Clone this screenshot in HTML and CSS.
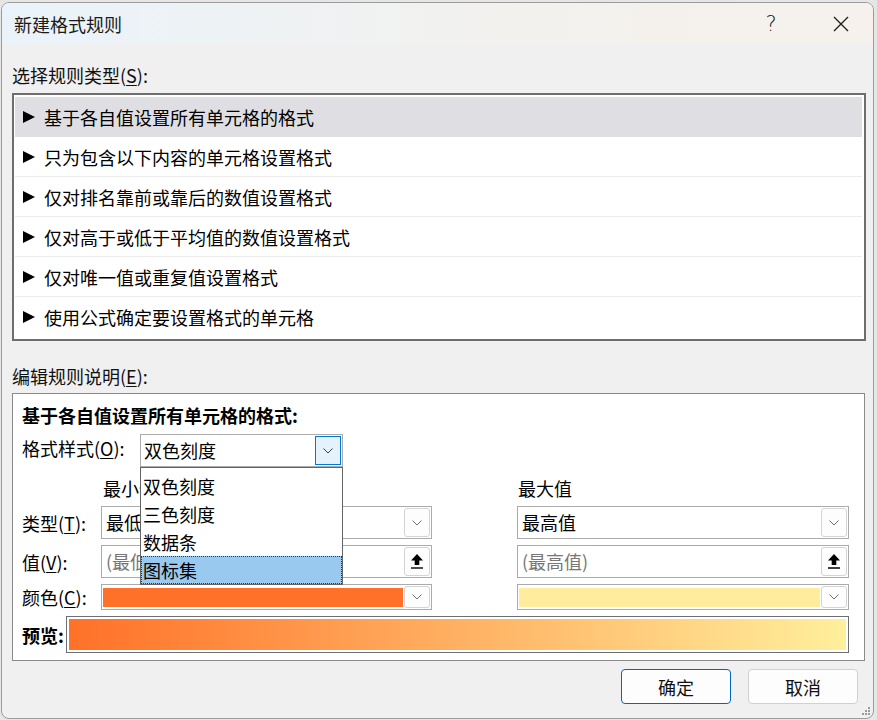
FILE: index.html
```html
<!DOCTYPE html>
<html>
<head>
<meta charset="utf-8">
<title>新建格式规则</title>
<link rel="stylesheet" href="styles.css">
</head>
<body>
<div class="dialog">
	<!-- 标题栏 -->
	<div class="titlebar">
		<span class="title">新建格式规则</span>
		<span class="tb-btn tb-help">?</span>
		<span class="tb-btn tb-close">
			<svg width="16" height="16" viewBox="0 0 16 16"><path d="M1 1L15 15M15 1L1 15" stroke="#1b1b1b" stroke-width="1.3" fill="none"/></svg>
		</span>
	</div>

	<div class="content">
		<div class="label top-label">选择规则类型(<u>S</u>):</div>
		<ul class="rule-list">
			<li class="active"><i class="tri"></i>基于各自值设置所有单元格的格式</li>
			<li><i class="tri"></i>只为包含以下内容的单元格设置格式</li>
			<li><i class="tri"></i>仅对排名靠前或靠后的数值设置格式</li>
			<li><i class="tri"></i>仅对高于或低于平均值的数值设置格式</li>
			<li><i class="tri"></i>仅对唯一值或重复值设置格式</li>
			<li><i class="tri"></i>使用公式确定要设置格式的单元格</li>
		</ul>

		<div class="label edit-label">编辑规则说明(<u>E</u>):</div>
		<div class="panel">
			<div class="panel-title">基于各自值设置所有单元格的格式:</div>

			<div class="style-row">
				<span class="style-label">格式样式(<u>O</u>):</span>
				<div class="combo style-combo">
					<span class="combo-text">双色刻度</span>
					<span class="drop-btn focus">
						<svg width="10" height="6" viewBox="0 0 10 6"><path d="M0.5 0.5L5 5L9.5 0.5" stroke="#3c3c3c" stroke-width="1" fill="none"/></svg>
					</span>
					<ul class="popup">
						<li>双色刻度</li>
						<li>三色刻度</li>
						<li>数据条</li>
						<li class="hot">图标集</li>
					</ul>
				</div>
			</div>

			<div class="grid">
				<span></span>
				<span class="col-head min-head">最小值</span>
				<span class="col-head max-col">最大值</span>

				<span class="row-label">类型(<u>T</u>):</span>
				<div class="combo">
					<span class="combo-text">最低值</span>
					<span class="drop-btn"><svg width="10" height="6" viewBox="0 0 10 6"><path d="M0.5 0.5L5 5L9.5 0.5" stroke="#707070" stroke-width="1" fill="none"/></svg></span>
				</div>
				<div class="combo max-col">
					<span class="combo-text">最高值</span>
					<span class="drop-btn"><svg width="10" height="6" viewBox="0 0 10 6"><path d="M0.5 0.5L5 5L9.5 0.5" stroke="#707070" stroke-width="1" fill="none"/></svg></span>
				</div>

				<span class="row-label">值(<u>V</u>):</span>
				<div class="combo">
					<span class="combo-text placeholder">(最低值)</span>
					<span class="drop-btn"><svg width="14" height="17" viewBox="0 0 14 17"><path d="M7 1L13 7.5H9.3V12H4.7V7.5H1Z" fill="#000"/><path d="M1 15H13" stroke="#000" stroke-width="1.4"/></svg></span>
				</div>
				<div class="combo max-col">
					<span class="combo-text placeholder">(最高值)</span>
					<span class="drop-btn"><svg width="14" height="17" viewBox="0 0 14 17"><path d="M7 1L13 7.5H9.3V12H4.7V7.5H1Z" fill="#000"/><path d="M1 15H13" stroke="#000" stroke-width="1.4"/></svg></span>
				</div>

				<span class="row-label">颜色(<u>C</u>):</span>
				<div class="combo color-combo">
					<span class="swatch swatch-min"></span>
					<span class="drop-btn"><svg width="10" height="6" viewBox="0 0 10 6"><path d="M0.5 0.5L5 5L9.5 0.5" stroke="#707070" stroke-width="1" fill="none"/></svg></span>
				</div>
				<div class="combo color-combo max-col">
					<span class="swatch swatch-max"></span>
					<span class="drop-btn"><svg width="10" height="6" viewBox="0 0 10 6"><path d="M0.5 0.5L5 5L9.5 0.5" stroke="#707070" stroke-width="1" fill="none"/></svg></span>
				</div>
			</div>

			<div class="preview-row">
				<span class="preview-label">预览:</span>
				<div class="preview"><div class="preview-fill"></div></div>
			</div>
		</div>

		<div class="buttons">
			<button class="btn primary">确定</button>
			<button class="btn">取消</button>
		</div>
	</div>

	<svg class="grip" width="8" height="8" viewBox="0 0 8 8">
		<rect x="6" y="0" width="2" height="2" fill="#9a9a9a"/>
		<rect x="3" y="3" width="2" height="2" fill="#9a9a9a"/>
		<rect x="6" y="3" width="2" height="2" fill="#9a9a9a"/>
		<rect x="0" y="6" width="2" height="2" fill="#9a9a9a"/>
		<rect x="3" y="6" width="2" height="2" fill="#9a9a9a"/>
		<rect x="6" y="6" width="2" height="2" fill="#9a9a9a"/>
	</svg>
</div>
</body>
</html>
```

FILE: styles.css
```css
*{margin:0; padding:0; list-style:none; box-sizing:border-box;}
body{background:#e6e6e6; font-family:"Noto Sans CJK SC","Noto Sans",sans-serif; font-size:18px; color:#000;}
u{text-decoration:underline; text-underline-offset:2px; text-decoration-thickness:1px;}

/*窗口*/
.dialog{width:873px; height:717px; margin:2px 0 0 1px; border:1px solid #9c9c9c; border-radius:8px; background:#f0f0f0; overflow:hidden; position:relative;}
.titlebar{height:41px; display:flex; align-items:center; padding:0 9px 0 12px; background:linear-gradient(90deg,#eaf3fa,#f3f1ee 60%,#f6f1ec);}
.titlebar .title{flex:1; line-height:24px; color:#1a1a1a;}
.tb-btn{width:46px; height:41px; display:flex; align-items:center; justify-content:center;}
.tb-help{font-family:"DejaVu Sans",sans-serif; font-size:21px; font-weight:300; color:#222; margin-right:24px;}
.tb-close svg{display:block; margin-top:1px;}

.content{padding:0 7px 0 10px;}
.label{line-height:24px; color:#111;}
.top-label{margin-top:19px;}
.edit-label{margin-top:23px;}

/*规则类型*/
.rule-list{margin-top:6px; border:2px solid #6e6e6e; background:#fff; padding:2px 2px 2px 1px;}
.rule-list li{height:40px; display:flex; align-items:center; padding-left:8px; border-bottom:1px solid #ececec; line-height:24px;}
.rule-list li:last-child{border-bottom:none;}
.rule-list li.active{background:#dfdfe3; border-bottom-color:#dfdfe3;}
.tri{display:block; width:0; height:0; border-left:12px solid #000; border-top:6px solid transparent; border-bottom:6px solid transparent; margin-right:9px;}

/*编辑规则*/
.panel{margin-top:5px; margin-right:1px; border:1px solid #8a8a8a; background:#fff; padding:9px 15px 7px 9px;}
.panel-title{font-weight:bold; line-height:24px;}
.style-row{display:flex; margin-top:7px; height:33px;}
.style-label{width:118px; line-height:24px; padding-top:2px;}

.combo{display:flex; border:1px solid #ababab; background:#fff; position:relative; height:33px;}
.combo-text{flex:1; line-height:31px; padding-left:4px; white-space:nowrap; overflow:hidden;}
.combo-text.placeholder{color:#767676;}
.drop-btn{width:26px; margin:1px 1px 1px 0; border:1px solid #d4d4d4; border-radius:3px; background:#fdfdfd; display:flex; align-items:center; justify-content:center;}
.drop-btn.focus{border-color:#0078d4; border-radius:0; background:#e5f1fb;}
.style-combo{width:203px;}
.style-combo .combo-text{padding-left:3px;}

.popup{position:absolute; top:calc(100% + 1px); left:-1px; width:calc(100% + 2px); background:#fff; border:1px solid #646464; padding:4px 0 0; z-index:5;}
.popup li{height:28px; line-height:28px; padding-left:2px;}
.popup li.hot{background:#99c9ef; outline:1px dotted #333; outline-offset:-1px;}

.grid{display:grid; grid-template-columns:79px 331px 1fr; grid-template-rows:24px 33px 33px 26px; row-gap:6px; margin-top:9px; align-items:center;}
.max-col{margin-left:85px;}
.col-head{line-height:24px; padding-left:1px;}
.min-head{padding-left:2px;}
.row-label{line-height:24px;}
.color-combo{height:26px;}
.swatch{flex:1; margin:3px 1px 2px 1px;}
.swatch-min{background:#ff7128;}
.swatch-max{background:#ffec9c;}

.preview-row{display:flex; align-items:center; margin-top:6px;}
.preview-label{width:44px; font-weight:bold; line-height:24px;}
.preview{flex:1; height:37px; border:1px solid #6f6f6f; padding:2px; background:#fff;}
.preview-fill{height:100%; background:linear-gradient(90deg,#ff7128,#ffef9c);}

/*按钮*/
.buttons{display:flex; justify-content:flex-end; gap:17px; margin-top:8px; padding-right:8px;}
.btn{width:110px; height:35px; border:1px solid #d0d0d0; border-radius:4px; background:#fdfdfd; font-family:inherit; font-size:18px; color:#111;}
.btn.primary{border-color:#0067c0;}

.grip{position:absolute; right:3px; bottom:3px;}
```
